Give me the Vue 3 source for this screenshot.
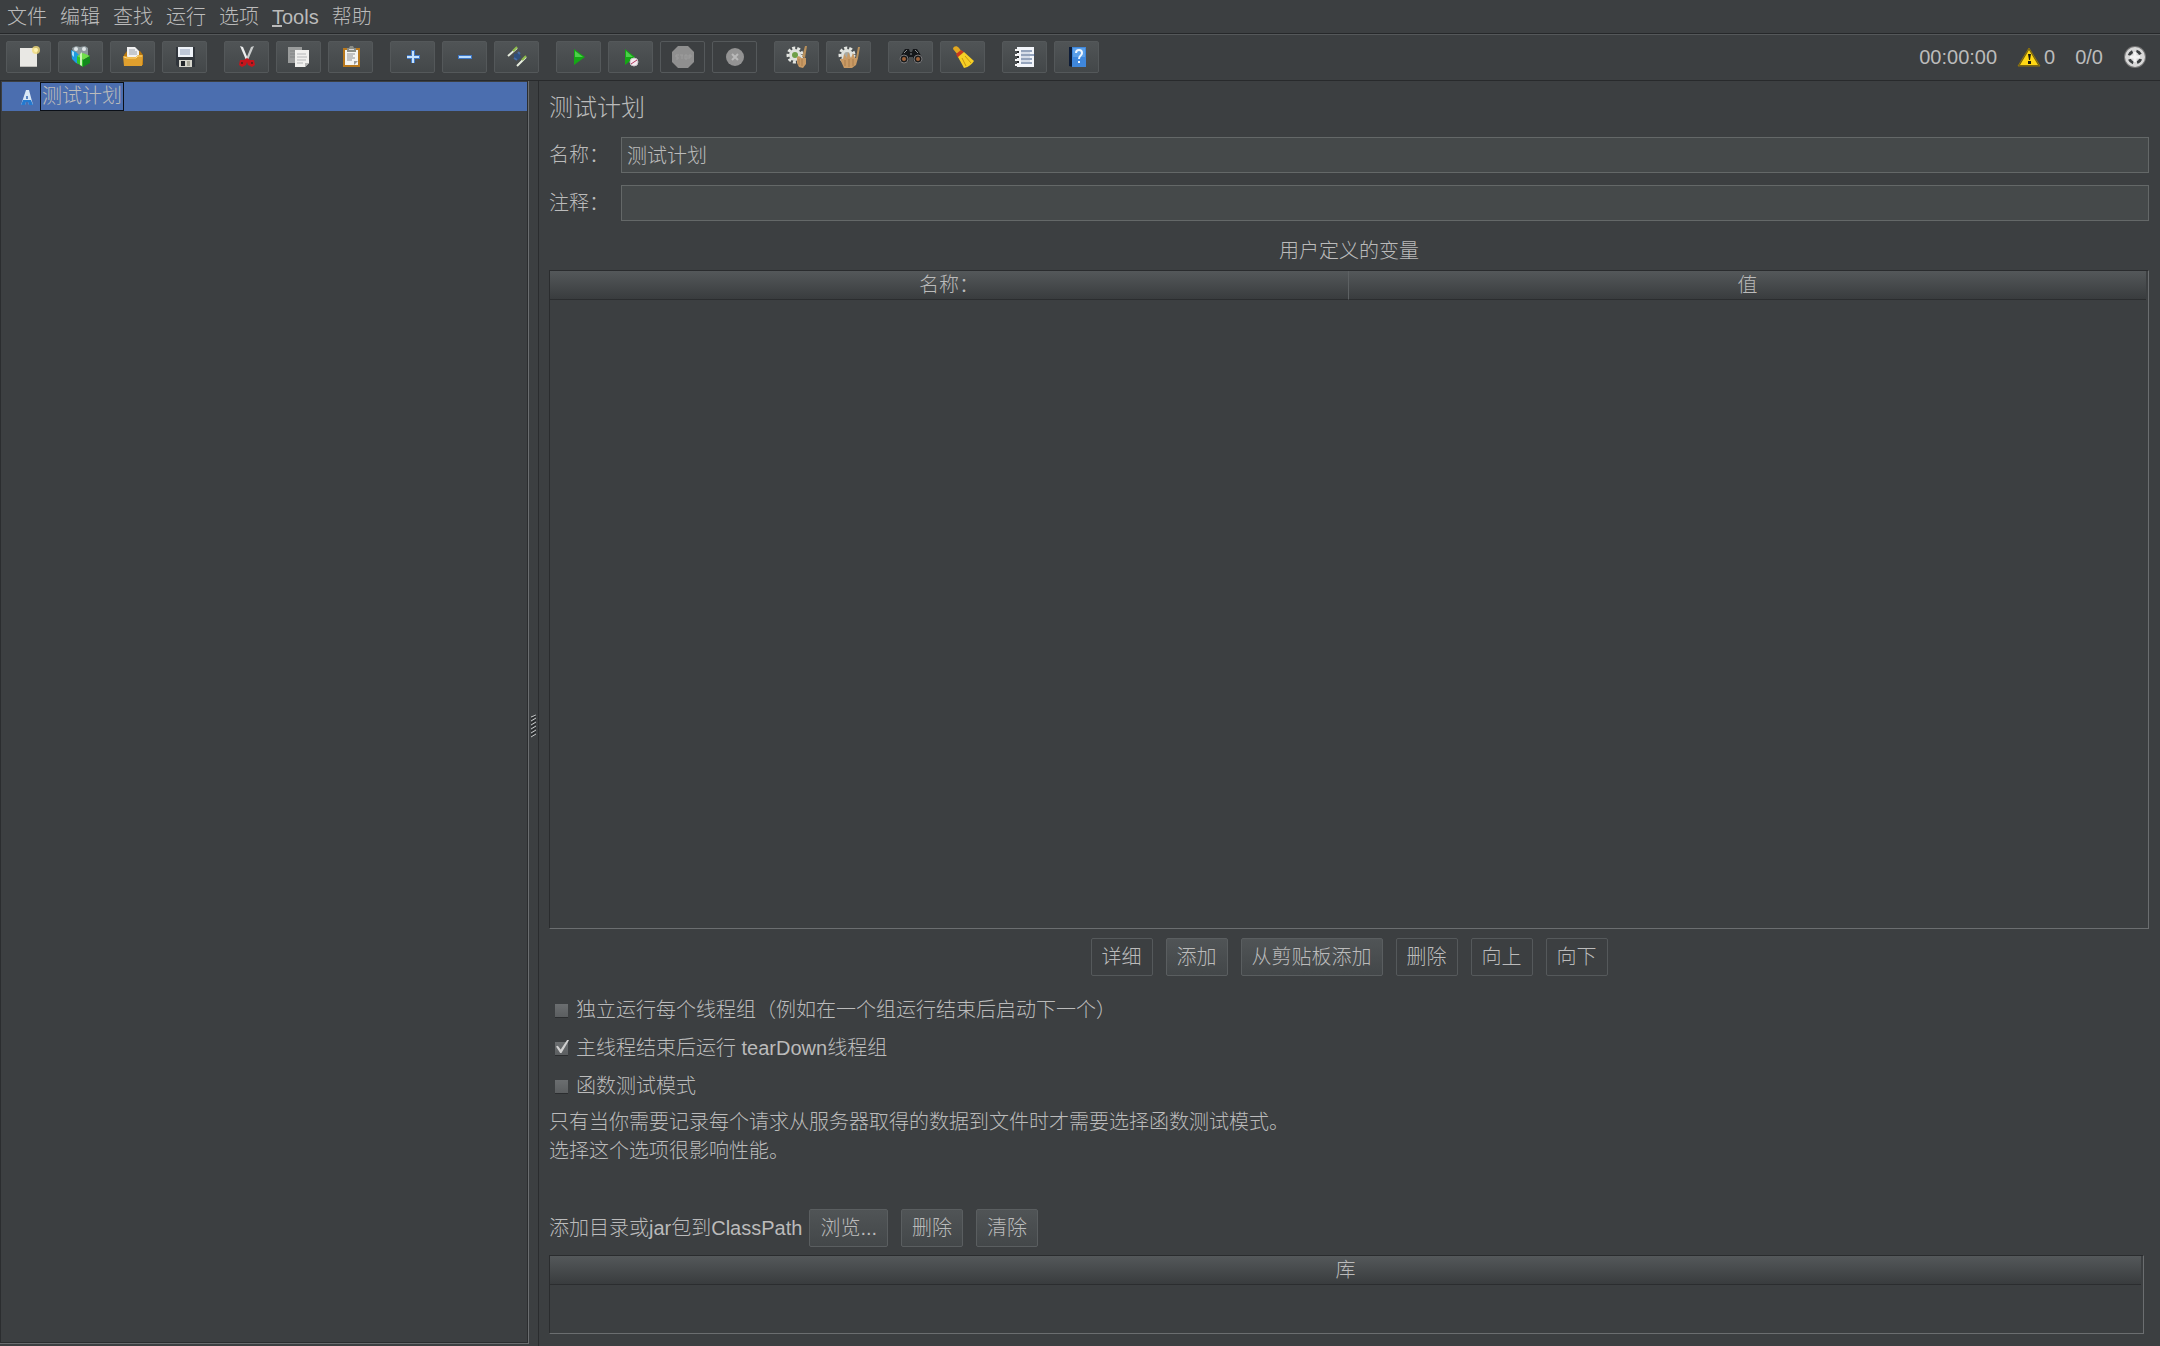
<script setup>
import { ref } from 'vue'

const menus = ['文件', '编辑', '查找', '运行', '选项', 'Tools', '帮助']

const toolGroups = [
  [
    { id: 'new', label: '新建' },
    { id: 'templates', label: '模板' },
    { id: 'open', label: '打开' },
    { id: 'save', label: '保存' },
  ],
  [
    { id: 'cut', label: '剪切' },
    { id: 'copy', label: '复制' },
    { id: 'paste', label: '粘贴' },
  ],
  [
    { id: 'expand', label: '全部展开' },
    { id: 'collapse', label: '全部折叠' },
    { id: 'toggle', label: '切换' },
  ],
  [
    { id: 'start', label: '启动' },
    { id: 'startNoTimers', label: '不停顿开始' },
    { id: 'stop', label: '停止', disabled: true },
    { id: 'shutdown', label: '关闭', disabled: true },
  ],
  [
    { id: 'clear', label: '清除' },
    { id: 'clearAll', label: '清除全部' },
  ],
  [
    { id: 'search', label: '查找' },
    { id: 'searchReset', label: '重置搜索' },
  ],
  [
    { id: 'functions', label: '函数助手对话框' },
    { id: 'help', label: '帮助' },
  ],
]

const name = ref('测试计划')
const comments = ref('')

const variableActions = [
  { label: '详细', disabled: true },
  { label: '添加' },
  { label: '从剪贴板添加' },
  { label: '删除', disabled: true },
  { label: '向上', disabled: true },
  { label: '向下', disabled: true },
]

const options = ref([
  { id: 'serial', label: '独立运行每个线程组（例如在一个组运行结束后启动下一个）', checked: false },
  { id: 'teardown', label: '主线程结束后运行 tearDown线程组', checked: true },
  { id: 'functional', label: '函数测试模式', checked: false },
])
</script>

<template>
  <div class="app">
    <nav class="menubar">
      <button v-for="m in menus" :key="m" type="button" class="menu">
        <template v-if="m === 'Tools'"><u>T</u>ools</template>
        <template v-else>{{ m }}</template>
      </button>
    </nav>

    <header class="toolbar">
      <div v-for="(group, i) in toolGroups" :key="i" class="tool-group">
        <button
          v-for="t in group"
          :key="t.id"
          type="button"
          class="btn tool"
          :disabled="t.disabled"
          :aria-label="t.label"
        >
          <svg viewBox="0 0 24 24" aria-hidden="true">
            <g v-if="t.id === 'new'">
              <path d="M3 3h17v19H3z" fill="#e9e8e4" />
              <path d="M3 21h17v1H3z" fill="#bdbcb8" />
              <circle cx="19" cy="5" r="4" fill="#f3dc7a" opacity=".8" />
              <circle cx="19" cy="5" r="2" fill="#fff3b0" />
            </g>
            <g v-else-if="t.id === 'templates'">
              <path d="M3 3l4-2 4 1 5-1 3 2v8H5z" fill="#8d989c" />
              <circle cx="7" cy="4" r="2" fill="#dfe6e8" />
              <circle cx="15" cy="4" r="2" fill="#dfe6e8" />
              <path d="M2 5l5 2 3 3v9l-3-1-4-4z" fill="#1d9be0" />
              <path d="M3 6l2 1v5l-2-2z" fill="#9fe0ff" />
              <path d="M8 11l6-3 7 3-7 4z" fill="#6fe04a" />
              <path d="M8 11l6 4v7l-6-4z" fill="#2fc42a" />
              <path d="M21 11l-7 4v7l7-4z" fill="#128a1c" />
              <path d="M11 9l2-2v14l-2-1z" fill="#c6f7b0" />
            </g>
            <g v-else-if="t.id === 'open'">
              <path d="M3 10l3-4h13l3 4v10H3z" fill="#b9780f" />
              <path d="M6 2h8l4 4v7H6z" fill="#f1f1f1" />
              <path d="M8 5h6M8 7h8M8 9h8" stroke="#9aa0a8" fill="none" />
              <path d="M2 11h3l2 1h8l2-2h5l-1 11H3z" fill="#e0a02e" />
              <path d="M3 12l3 1h9l2-2h4" stroke="#ffd97a" fill="none" />
            </g>
            <g v-else-if="t.id === 'save'">
              <path d="M3 2h19v20H5l-2-2z" fill="#30353b" />
              <path d="M5 2h15v10H5z" fill="#eef2f8" />
              <path d="M7 5h10M7 7h10M7 9h10" stroke="#8e9db8" fill="none" />
              <path d="M6 15h13v7H6z" fill="#d6d6cd" />
              <path d="M8 16h4v5H8z" fill="#22262a" />
              <path d="M14 16h3v5h-3z" fill="#a6a698" />
            </g>
            <g v-else-if="t.id === 'cut'">
              <path d="M5 1l3 1 5 12-2 1z" fill="#eceeee" />
              <path d="M19 1l-3 1-5 12 2 1z" fill="#c9cccc" />
              <path d="M12 13l-3 2-4 0-1 5 3 2 4-2 1-3 1 3 4 2 3-2-1-5-4 0z" fill="#c8141c" />
              <circle cx="7" cy="18" r="1" fill="#4a2022" />
              <circle cx="17" cy="18" r="1" fill="#4a2022" />
            </g>
            <g v-else-if="t.id === 'copy'">
              <path d="M1 2h14v16H1z" fill="#9a9c9c" />
              <path d="M3 6h9M3 9h5M3 12h5" stroke="#828585" fill="none" />
              <path d="M8 5h14v13l-4 4H8z" fill="#f0f0ee" />
              <path d="M10 9h9M10 12h10M10 15h9M10 18h6" stroke="#b4b6b8" fill="none" />
              <path d="M22 18l-4 4v-4z" fill="#b5b5b5" />
            </g>
            <g v-else-if="t.id === 'paste'">
              <path d="M4 3h17v19H4z" fill="#b8781d" />
              <path d="M6 5h13v15H6z" fill="#f4f4f2" />
              <path d="M8 3h2l1-2h3l1 2h2v4H8z" fill="#8a8d86" />
              <path d="M10 4h5v1h-5z" fill="#d8d8d8" />
              <path d="M8 9h8M8 11h6M8 13h8M8 15h5" stroke="#8f9296" fill="none" />
              <path d="M19 16l-4 4v-4z" fill="#9a9a9a" />
            </g>
            <g v-else-if="t.id === 'expand'">
              <path d="M6 12h13M12 5v13" stroke="#3f77c4" stroke-width="4" fill="none" />
              <path d="M6 12h12M12 6v12" stroke="#c5e2ff" stroke-width="2" fill="none" />
            </g>
            <g v-else-if="t.id === 'collapse'">
              <path d="M5 12h14" stroke="#3f77c4" stroke-width="4" fill="none" />
              <path d="M6 12h12" stroke="#b9dcff" stroke-width="2" fill="none" />
            </g>
            <g v-else-if="t.id === 'toggle'">
              <path d="M3 11l9-8" stroke="#e8eedf" stroke-width="2" fill="none" />
              <path d="M8 6l4-4" stroke="#8dbb4a" stroke-width="2" fill="none" />
              <path d="M12 21l9-9" stroke="#e8eedf" stroke-width="2" fill="none" />
              <path d="M17 15l4-4" stroke="#8dbb4a" stroke-width="2" fill="none" />
              <path d="M9 9l5-1 2 4-3 3-4-2z" fill="#2f4f7d" />
              <path d="M13 7l2 2M9 13l3 2" stroke="#456ba6" stroke-width="2" fill="none" />
            </g>
            <g v-else-if="t.id === 'start'">
              <path d="M7 4l11 8-11 8z" fill="#15a815" />
              <path d="M8 6l8 6H8z" fill="#4dd04a" />
            </g>
            <g v-else-if="t.id === 'startNoTimers'">
              <path d="M6 4l10 8-10 8z" fill="#15a815" />
              <path d="M7 6l7 6H7z" fill="#4dd04a" />
              <circle cx="15" cy="17" r="4" fill="#f3e9ee" />
              <circle cx="15" cy="17" r="4" stroke="#c9c3c8" fill="none" />
              <path d="M12 19l6-4" stroke="#b0345c" fill="none" />
            </g>
            <g v-else-if="t.id === 'stop'">
              <path d="M7 1h10l6 6v10l-6 6H7l-6-6V7z" fill="#8f8f8f" />
              <path d="M5 10h3M5 10v2h2v2H5M9 10h3M11 10v4M14 10h2v4h-2zM18 14v-4h2v2h-2" stroke="#9d9d9d" fill="none" />
            </g>
            <g v-else-if="t.id === 'shutdown'">
              <circle cx="12" cy="12" r="9" fill="#939393" />
              <path d="M9 9l6 6M15 9l-6 6" stroke="#b9b9b9" stroke-width="2" fill="none" />
            </g>
            <g v-else-if="t.id === 'clear' || t.id === 'clearAll'">
              <circle cx="10" cy="10" r="7" fill="none" stroke="#e4e6e2" stroke-width="3" stroke-dasharray="3 2" />
              <circle cx="10" cy="10" r="6" fill="#dfe2dd" />
              <circle cx="10" cy="10" r="3" :fill="t.id === 'clear' ? '#6fa048' : '#a8aaa4'" />
              <g v-if="t.id === 'clear'">
                <path d="M20 1h2l-2 12-3-1z" fill="#b8905c" />
                <path d="M12 12l2-1 2 2 5 0v6l-3 4-4-1-2-4z" fill="#c99a64" />
                <path d="M14 14v6M17 14v7" stroke="#a87c4c" fill="none" />
              </g>
              <g v-else>
                <path d="M21 2h2l-2 11h-2z" fill="#b8905c" />
                <path d="M3 14l3 0 1-5 3 4 1-6 3 6 2-5 2 5 3 0-2 7-4 3H7z" fill="#c99a64" />
                <path d="M8 15v6M12 14v8M16 14v7" stroke="#a87c4c" fill="none" />
              </g>
            </g>
            <g v-else-if="t.id === 'search'">
              <path d="M1 12l5-8h4l1 3h2l1-3h4l5 8v5H15l-1-5h-4l-1 5H1z" fill="#15171a" />
              <path d="M5 8l3-3M16 5l3 3M11 9h2" stroke="#8a8d90" fill="none" />
              <circle cx="5" cy="14" r="4" fill="#1b1b1b" stroke="#77777a" />
              <circle cx="19" cy="14" r="4" fill="#1b1b1b" stroke="#77777a" />
              <circle cx="5" cy="14" r="2" fill="#a0633a" />
              <circle cx="19" cy="14" r="2" fill="#a0633a" />
            </g>
            <g v-else-if="t.id === 'searchReset'">
              <path d="M2 4c0-3 4-4 6-1l3 4-4 3z" fill="#e2a820" />
              <path d="M5 9l5-4 3 2-6 6z" fill="#c93a1e" />
              <path d="M7 12l6-5 10 9c-2 3-5 6-10 7z" fill="#f6cf25" />
              <path d="M11 13l4 8M14 11l6 7" stroke="#c8950e" fill="none" />
            </g>
            <g v-else-if="t.id === 'functions'">
              <path d="M4 2h17v20H4z" fill="#f2f5fa" />
              <path d="M8 6h11M8 10h14M8 14h11M8 18h11" stroke="#37537f" fill="none" />
              <path d="M8 8h9M8 12h9M8 16h9" stroke="#b8c4d6" fill="none" />
              <path d="M2 5h5M2 10h5M2 15h5M2 20h5" stroke="#f4f4f4" stroke-width="2" fill="none" />
              <path d="M4 7h2M4 12h2M4 17h2" stroke="#26292b" stroke-width="2" fill="none" />
            </g>
            <g v-else>
              <path d="M4 2h4v20l-4-1z" fill="#0e1d38" />
              <path d="M7 2h14v20H7z" fill="#3f87dc" />
              <path d="M8 3h12v9H8z" fill="#5b9fe8" />
              <path d="M11 8c0-4 6-4 6 0 0 3-3 2-3 6" stroke="#eef6ff" stroke-width="2" fill="none" />
              <path d="M13 16h2v2h-2z" fill="#eef6ff" />
            </g>
          </svg>
        </button>
      </div>

      <div class="status">
        <span>00:00:00</span>
        <span class="warnings">
          <svg viewBox="0 0 24 24" aria-hidden="true">
            <path d="M12 3L1 21h22z" fill="#6b5a10" stroke="#8f7510" stroke-linejoin="round" />
            <path d="M12 5L3 20h18z" fill="#ffd814" />
            <path d="M11 9h3l-1 6h-1zM11 16h3v3h-3z" fill="#1c1a10" />
          </svg>
          <span>0</span>
        </span>
        <span>0/0</span>
        <svg viewBox="0 0 24 24" aria-hidden="true">
          <circle cx="12" cy="12" r="11" fill="#777" />
          <circle cx="12" cy="12" r="10" fill="#d8d8d8" />
          <circle cx="12" cy="12" r="6" fill="none" stroke="#3b3e40" stroke-width="3" stroke-dasharray="5 4" stroke-dashoffset="-2" />
          <path d="M12 7v10M7 12h10" stroke="#f4f4f4" stroke-width="3" />
        </svg>
      </div>
    </header>

    <main class="workspace">
      <aside class="tree">
        <div class="tree-row">
          <svg viewBox="0 0 16 20" aria-hidden="true">
            <path d="M7 3h3l4 15h-4l-1-4H7l-1 4H2z" fill="#d9e8f6" />
            <path d="M4 13h8l2 5h-4l-1-3H7l-1 3H2z" fill="#2479cf" />
            <path d="M7 9h2v3H7z" fill="#5a86c4" />
          </svg>
          <span class="tree-label">测试计划</span>
        </div>
      </aside>

      <div class="divider">
        <svg viewBox="0 0 8 24" aria-hidden="true">
          <path d="M1 3l5-2M1 7l5-3M1 11l5-3M1 15l5-3M1 19l5-3M1 23l5-3" stroke="#c4c6c7" fill="none" />
          <path d="M1 5l5-3M1 9l5-3M1 13l5-3M1 17l5-3M1 21l5-3" stroke="#1f2122" fill="none" />
        </svg>
      </div>

      <section class="editor">
        <h1>测试计划</h1>
        <div class="field">
          <label for="plan-name">名称：</label>
          <input id="plan-name" v-model="name" type="text" />
        </div>
        <div class="field">
          <label for="plan-comments">注释：</label>
          <input id="plan-comments" v-model="comments" type="text" />
        </div>

        <h2 id="vars-title">用户定义的变量</h2>
        <div class="table-box variables">
          <table aria-labelledby="vars-title">
            <thead>
              <tr><th>名称：</th><th>值</th></tr>
            </thead>
          </table>
        </div>
        <div class="actions">
          <button v-for="a in variableActions" :key="a.label" type="button" class="btn" :disabled="a.disabled">
            {{ a.label }}
          </button>
        </div>

        <div class="options">
          <label v-for="o in options" :key="o.id" class="option" :for="o.id">
            <input :id="o.id" v-model="o.checked" type="checkbox" />
            <span>{{ o.label }}</span>
          </label>
        </div>
        <p>
          只有当你需要记录每个请求从服务器取得的数据到文件时才需要选择函数测试模式。<br />
          选择这个选项很影响性能。
        </p>

        <div class="classpath">
          <span>添加目录或jar包到ClassPath</span>
          <div class="classpath-actions">
            <button type="button" class="btn">浏览...</button>
            <button type="button" class="btn">删除</button>
            <button type="button" class="btn">清除</button>
          </div>
        </div>
        <div class="table-box library">
          <table>
            <thead>
              <tr><th>库</th></tr>
            </thead>
          </table>
        </div>
      </section>
    </main>
  </div>
</template>

<style>
body {
  margin: 0;
  background: #3c3f41;
}
</style>

<style scoped>
.app {
  display: flex;
  flex-direction: column;
  min-height: 100vh;
  background: #3c3f41;
  color: #bbbbbb;
  font-family: "Liberation Sans", "Noto Sans CJK SC", sans-serif;
  font-size: 20px;
  font-weight: 300;
  line-height: 28px;
}

button,
input {
  font: inherit;
  color: inherit;
}

button,
input,
table,
.tree,
.table-box {
  box-sizing: border-box;
}

svg {
  display: block;
  flex: none;
  width: 24px;
  height: 24px;
}

.menubar {
  display: flex;
  gap: 13px;
  height: 33px;
  padding: 0 7px;
  border-bottom: 1px solid #26282a;
}

.menu {
  padding: 0;
  border: 0;
  background: none;
  white-space: nowrap;
}

.toolbar {
  display: flex;
  align-items: center;
  gap: 17px;
  height: 44px;
  padding: 0 13px 1px 6px;
  border-top: 1px solid #55585a;
  border-bottom: 1px solid #282a2c;
}

.tool-group {
  display: flex;
  gap: 7px;
}

.btn {
  height: 38px;
  padding: 0 10px;
  border: 1px solid #5a5e60;
  border-radius: 2px;
  background: linear-gradient(#505456, #434749);
  white-space: nowrap;
}

.btn:disabled {
  background: none;
  border-color: #55595b;
}

.tool {
  display: flex;
  align-items: center;
  justify-content: center;
  width: 45px;
  height: 32px;
  padding: 0;
  border-color: #54585a;
}

.status {
  display: flex;
  align-items: center;
  gap: 20px;
  margin-left: auto;
}

.warnings {
  display: flex;
  align-items: center;
  gap: 3px;
}

.workspace {
  display: flex;
  flex: 1;
}

.tree {
  flex: none;
  width: 529px;
  margin-bottom: 2px;
  padding: 1px 0 0 2px;
  border-right: 1px solid #6b6e70;
  border-bottom: 1px solid #6b6e70;
  box-shadow: inset 1px 0 #2b2d2f, inset -1px -1px #2b2d2f;
}

.tree-row {
  display: flex;
  align-items: center;
  gap: 5px;
  height: 29px;
  margin-right: 1px;
  padding-left: 17px;
  background: #4b6eaf;
}

.tree-row svg {
  width: 16px;
  height: 20px;
}

.tree-label {
  border: 1px solid #0b1018;
  padding: 0 1px;
  line-height: 27px;
}

.divider {
  display: flex;
  align-items: center;
  justify-content: center;
  flex: none;
  width: 9px;
  padding-top: 24px;
  border-right: 1px solid #2a2c2e;
}

.divider svg {
  width: 8px;
}

.editor {
  display: flex;
  flex: 1;
  flex-direction: column;
  min-width: 0;
  padding: 11px 11px 12px 10px;
}

h1,
h2,
p {
  margin: 0;
  font-weight: inherit;
}

h1 {
  margin-bottom: 13px;
  font-size: 24px;
  line-height: 32px;
}

.field {
  display: flex;
  align-items: center;
  margin-bottom: 12px;
}

.field label {
  flex: none;
  width: 72px;
}

.field input {
  flex: 1;
  min-width: 0;
  height: 36px;
  padding: 0 5px 2px;
  border: 1px solid #646868;
  background: #45494a;
  outline: 0;
}

h2 {
  margin: 3px 0 4px;
  font-size: 20px;
  line-height: 30px;
  text-align: center;
}

.table-box {
  padding-right: 2px;
  border: 1px solid #2a2c2e;
  border-right-color: #6b6e70;
  border-bottom-color: #6b6e70;
}

.variables {
  flex: 1;
  min-height: 120px;
}

.library {
  height: 79px;
  margin-right: 5px;
}

table {
  width: 100%;
  table-layout: fixed;
  border-collapse: separate;
  border-spacing: 0;
}

th {
  height: 28px;
  padding: 0;
  border-bottom: 1px solid #2b2d2f;
  background: linear-gradient(#54585a, #393c3e);
  font-weight: inherit;
}

th + th {
  border-left: 1px solid #5d6163;
}

.actions {
  display: flex;
  justify-content: center;
  gap: 13px;
  margin-top: 9px;
}

.options {
  margin-top: 15px;
}

.option {
  display: flex;
  align-items: center;
  gap: 8px;
  height: 38px;
  padding-left: 6px;
}

.option input {
  position: relative;
  flex: none;
  width: 13px;
  height: 13px;
  margin: 0;
  appearance: none;
  background: linear-gradient(#6b6e70, #5b5e60);
  box-shadow: 0 1px #2b2d2f;
}

.option input:checked::after {
  content: "";
  position: absolute;
  left: 1px;
  top: -2px;
  width: 13px;
  height: 14px;
  background: #d0d0d0;
  clip-path: polygon(0 50%, 14% 44%, 36% 72%, 88% 0, 100% 6%, 42% 96%, 32% 96%);
}

p {
  margin: 3px 0 43px;
  line-height: 29px;
}

.classpath {
  display: flex;
  align-items: center;
  gap: 7px;
  margin-bottom: 8px;
}

.classpath-actions {
  display: flex;
  gap: 13px;
}
</style>
